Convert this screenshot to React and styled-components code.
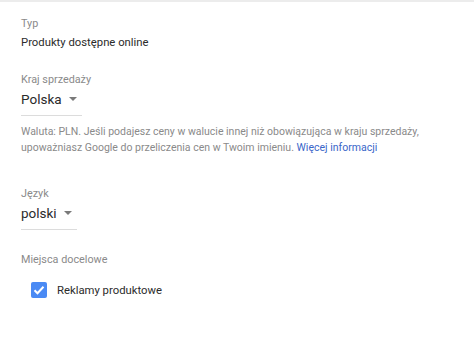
import React from "react";
import styled, { createGlobalStyle } from "styled-components";

const GlobalStyle = createGlobalStyle`
  html, body {
    margin: 0;
    padding: 0;
    background: #ffffff;
  }
  body {
    font-family: Roboto, "Noto Sans", "Liberation Sans", sans-serif;
    -webkit-font-smoothing: antialiased;
  }
`;

const Page = styled.div`
  width: 474px;
  height: 349px;
  background: #fff;
  border-top: 2px solid #ececec;
  box-sizing: border-box;
  overflow: hidden;
`;

const Content = styled.div`
  display: flex;
  flex-direction: column;
  padding: 15px 0 0 21px;
`;

const Section = styled.div`
  display: flex;
  flex-direction: column;
  margin-top: ${(p) => p.$gap || 0}px;
`;

const Label = styled.div`
  font-size: 10.8px;
  line-height: 14px;
  color: #8a8a8a;
`;

const Value = styled.div`
  font-size: 11.3px;
  line-height: 16px;
  color: #2b2b2b;
  margin-top: 4px;
`;

const Select = styled.div`
  display: flex;
  align-items: center;
  width: ${(p) => p.$width}px;
  height: 23px;
  border-bottom: 1px solid #dcdcdc;
  font-size: 13.5px;
  color: #2b2b2b;
  padding-bottom: 5px;
`;

const Caret = styled.span`
  width: 0;
  height: 0;
  margin-left: 7px;
  margin-top: 1px;
  border-left: 4px solid transparent;
  border-right: 4px solid transparent;
  border-top: 4px solid #7a7a7a;
`;

const Helper = styled.p`
  margin: 8px 0 0;
  font-size: 10.5px;
  line-height: 16px;
  color: #8a8a8a;
`;

const Link = styled.a`
  color: #3a66c9;
  text-decoration: none;
`;

const CheckRow = styled.label`
  display: flex;
  align-items: center;
  gap: 10px;
  margin: 15px 0 0 10px;
  font-size: 11.3px;
  color: #2b2b2b;
`;

const Box = styled.span`
  width: 16px;
  height: 16px;
  border-radius: 2px;
  background: #4a8af4;
  display: flex;
  align-items: center;
  justify-content: center;
`;

function App() {
  return (
    <>
      <GlobalStyle />
      <Page>
        <Content>
          <Section>
            <Label>Typ</Label>
            <Value>Produkty dostępne online</Value>
          </Section>
          <Section $gap={22}>
            <Label>Kraj sprzedaży</Label>
            <Select $width={61}>
              Polska
              <Caret />
            </Select>
            <Helper>
              Waluta: PLN. Jeśli podajesz ceny w walucie innej niż obowiązująca w kraju sprzedaży,
              <br />
              upoważniasz Google do przeliczenia cen w Twoim imieniu.{" "}
              <Link href="#">Więcej informacji</Link>
            </Helper>
          </Section>
          <Section $gap={31}>
            <Label>Język</Label>
            <Select $width={56}>
              polski
              <Caret />
            </Select>
          </Section>
          <Section $gap={23}>
            <Label>Miejsca docelowe</Label>
            <CheckRow>
              <Box>
                <svg width="12" height="10" viewBox="0 0 12 10">
                  <path d="M1.5 5.2 L4.5 8.2 L10.5 1.8" fill="none" stroke="#fff" strokeWidth="2" />
                </svg>
              </Box>
              Reklamy produktowe
            </CheckRow>
          </Section>
        </Content>
      </Page>
    </>
  );
}

export default App;
